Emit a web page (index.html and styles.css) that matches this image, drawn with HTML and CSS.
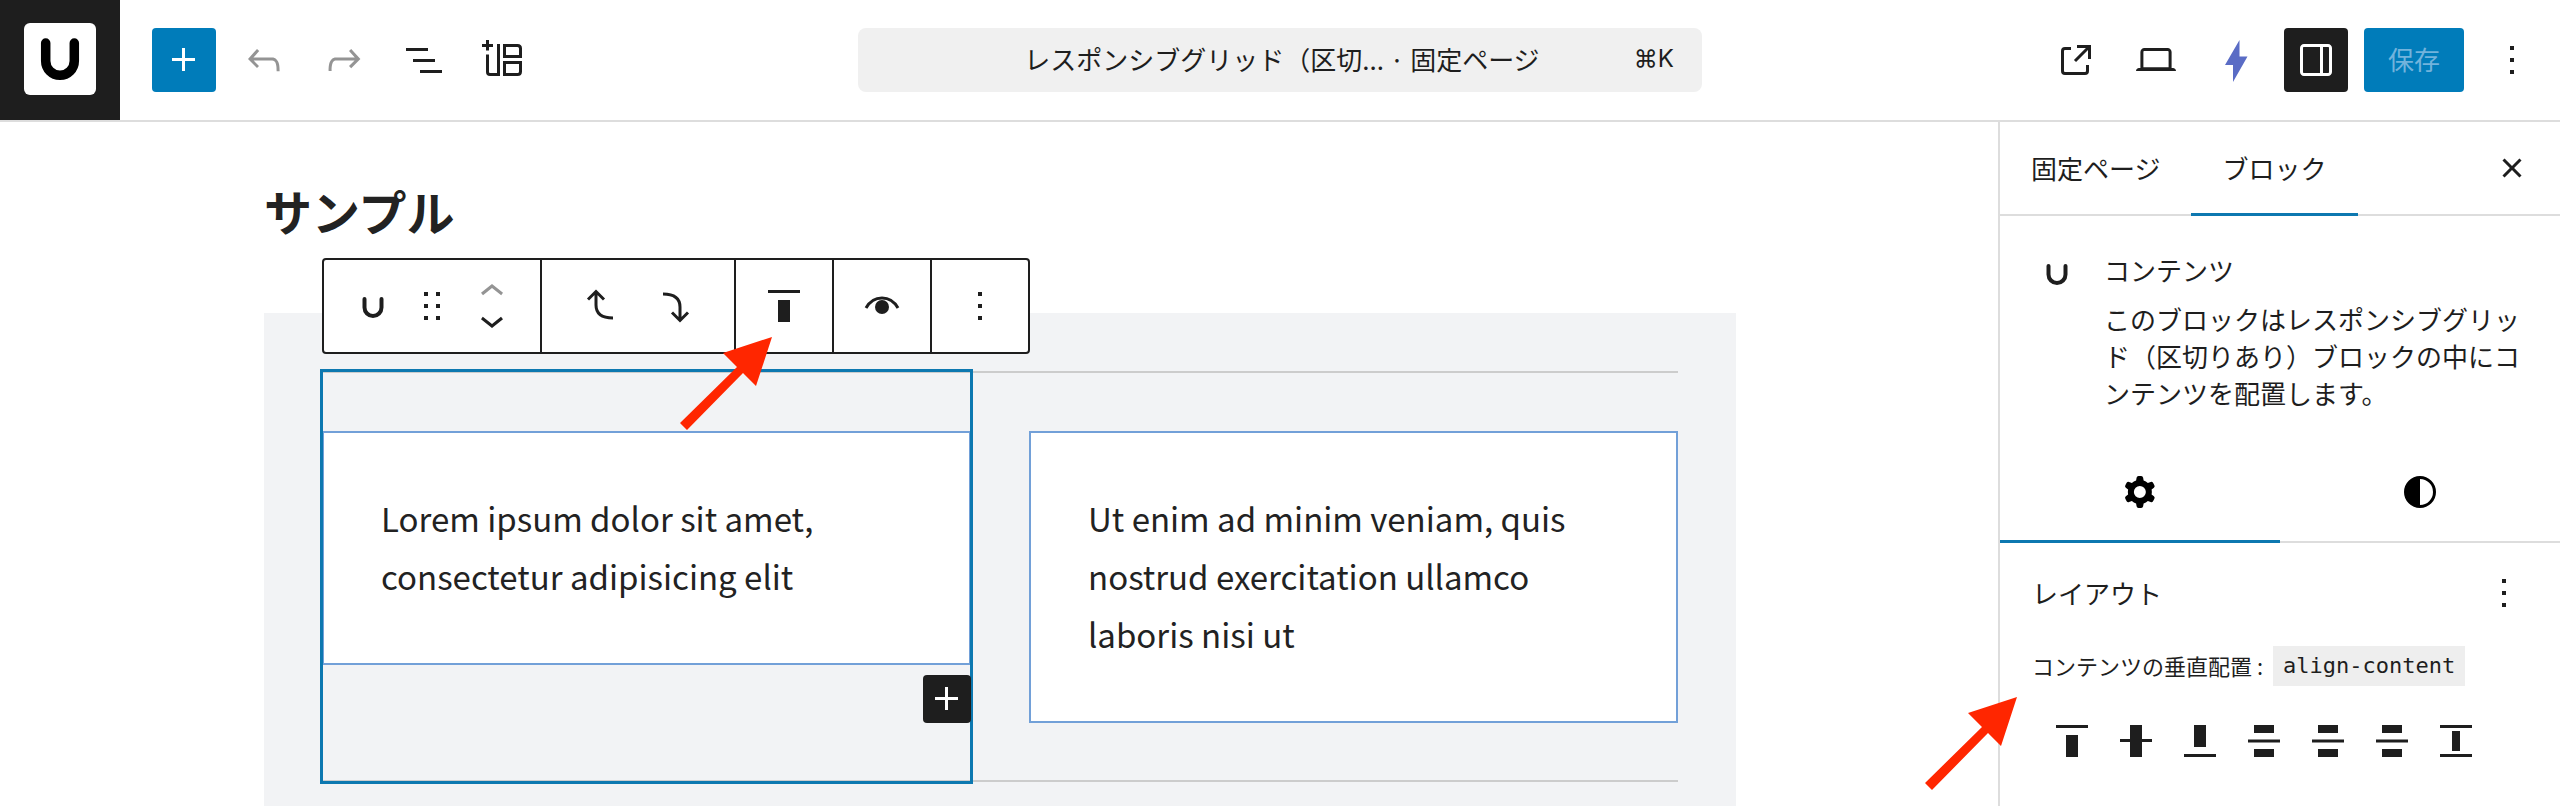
FILE: index.html
```
<!DOCTYPE html>
<html lang="ja">
<head>
    <meta charset="UTF-8">
    <meta name="viewport" content="width=device-width, initial-scale=1.0">
    <title>レスポンシブグリッド</title>
    <link rel="stylesheet" href="styles.css">
</head>
<body>
    <header class="header">
        <a href="#" class="site-logo" aria-label="Site">
            <svg viewBox="0 0 120 120">
                <rect x="24" y="23" width="72" height="72" rx="6" fill="#fff"/>
                <path d="M45.7 43V61a14.3 14.3 0 0 0 28.6 0V43" fill="none" stroke="#000" stroke-width="9.5" stroke-linecap="round"/>
            </svg>
        </a>

        <div class="header-left">
            <button class="icon-button primary" aria-label="追加">
                <svg viewBox="0 0 24 24"><path d="M11 12.5V17.5H12.5V12.5H17.5V11H12.5V6H11V11H6V12.5H11Z"/></svg>
            </button>
            <button class="icon-button" aria-label="元に戻す" disabled>
                <svg viewBox="0 0 24 24"><path d="M18.3 11.7c-.6-.6-1.4-.9-2.3-.9H6.7l2.9-3.3-1.1-1-4.5 5L8.5 16l1-1-2.7-2.7H16c.5 0 .9.2 1.3.5 1 1 1 3.4 1 4.5v.3h1.5v-.2c0-1.5 0-4.3-1.5-5.7z"/></svg>
            </button>
            <button class="icon-button" aria-label="やり直す" disabled>
                <svg viewBox="0 0 24 24"><path d="M15.6 6.5l-1.1 1 2.9 3.3H8c-.9 0-1.7.3-2.3.9-1.4 1.5-1.4 4.2-1.4 5.6v.2h1.5v-.3c0-1.1 0-3.5 1-4.5.3-.3.7-.5 1.3-.5h9.2L14.5 15l1.1 1.1 4.6-4.6-4.6-5z"/></svg>
            </button>
            <button class="icon-button" aria-label="リスト表示">
                <svg viewBox="0 0 24 24"><path d="M3 6h11v1.5H3V6Zm3.5 5.5h11V13h-11v-1.5ZM21 17H10v1.5h11V17Z"/></svg>
            </button>
            <button class="icon-button" aria-label="パターン">
                <svg viewBox="0 0 48 48" class="line-icon"><path d="M7.5 4v10.5M2 9.500h11M7.500 18.500v17.500q0 2.500 2.500 2.500h8.500V8M24.500 9.500h13q3 0 3 3v8h-16zM24.500 26.500h16v9q0 3-3 3h-13z"/></svg>
            </button>
        </div>

        <button class="document-bar">
            <span class="document-title">レスポンシブグリッド（区切... · 固定ページ</span>
            <span class="shortcut">⌘K</span>
        </button>

        <div class="header-right">
            <button class="icon-button" aria-label="表示">
                <svg viewBox="0 0 24 24"><path d="M19.5 4.5h-7V6h4.44l-5.97 5.97 1.06 1.06L18 7.06v4.44h1.5v-7Zm-13 1a2 2 0 0 0-2 2v10a2 2 0 0 0 2 2h10a2 2 0 0 0 2-2v-3H17v3a.5.5 0 0 1-.5.5h-10a.5.5 0 0 1-.5-.5v-10a.5.5 0 0 1 .5-.5h3V5.5h-3Z"/></svg>
            </button>
            <button class="icon-button" aria-label="プレビュー">
                <svg viewBox="0 0 24 24"><path d="M20.5 16h-.7V8c0-1.1-.9-2-2-2H6.2c-1.1 0-2 .9-2 2v8h-.7c-.8 0-1.5.7-1.5 1.5h20c0-.8-.7-1.5-1.5-1.5zM5.7 8c0-.3.2-.5.5-.5h11.6c.3 0 .5.2.5.5v7.6H5.7V8z"/></svg>
            </button>
            <button class="icon-button bolt" aria-label="設定">
                <svg viewBox="0 0 48 48"><path d="M27.500 7v16.500h8L21 49V32H13z" transform="translate(0 -3)"/></svg>
            </button>
            <button class="icon-button active" aria-label="サイドバー">
                <svg viewBox="0 0 24 24"><path d="M18 4H6c-1.1 0-2 .9-2 2v12c0 1.1.9 2 2 2h12c1.1 0 2-.9 2-2V6c0-1.1-.9-2-2-2zm-4 14.5H6c-.3 0-.5-.2-.5-.5V6c0-.3.2-.5.5-.5h8v13zm4.5-.5c0 .3-.2.5-.5.5h-2.5v-13H18c.3 0 .5.2.5.5v12z"/></svg>
            </button>
            <button class="save-button">保存</button>
            <button class="icon-button" aria-label="オプション">
                <svg viewBox="0 0 24 24"><path d="M13 19h-2v-2h2v2zm0-6h-2v-2h2v2zm0-6h-2V5h2v2z"/></svg>
            </button>
        </div>
    </header>

    <div class="workspace">
        <main class="editor">
            <div class="canvas">
                <h1>サンプル</h1>
                <div class="section-block">
                    <div class="grid">
                        <div class="cell selected">
                            <div class="card">
                                <p>Lorem ipsum dolor sit amet, consectetur adipisicing elit</p>
                            </div>

                            <div class="toolbar">
                                <div class="toolbar-group block-group">
                                    <button class="tool" aria-label="コンテンツ">
                                        <svg viewBox="0 0 48 48" class="u-icon"><path d="M16.500 17v8.500a8.500 8.500 0 0 0 17 0V17"/></svg>
                                    </button>
                                    <button class="tool" aria-label="ドラッグ">
                                        <svg viewBox="0 0 24 24"><path d="M8 7h2V5H8v2zm0 6h2v-2H8v2zm0 6h2v-2H8v2zm6-14v2h2V5h-2zm0 8h2v-2h-2v2zm0 6h2v-2h-2v2z"/></svg>
                                    </button>
                                    <div class="movers">
                                        <button class="tool" aria-label="上に移動" disabled>
                                            <svg viewBox="0 0 24 24"><path d="M6.5 12.4L12 8l5.5 4.4-.9 1.2L12 10l-4.5 3.6-1-1.2z"/></svg>
                                        </button>
                                        <button class="tool" aria-label="下に移動">
                                            <svg viewBox="0 0 24 24"><path d="M17.5 11.6L12 16l-5.5-4.4.9-1.2L12 14l4.5-3.6 1 1.2z"/></svg>
                                        </button>
                                    </div>
                                </div>
                                <div class="toolbar-group arrow-group">
                                    <button class="tool" aria-label="前に移動">
                                        <svg viewBox="0 0 48 48" class="line-icon"><path d="M12 17.500l8-8 8 8M20 10v13q0 13 17 13"/></svg>
                                    </button>
                                    <button class="tool" aria-label="後に移動">
                                        <svg viewBox="0 0 48 48" class="line-icon"><path d="M11 12q17 0 17 13v13M20 30.500l8 8 8-8"/></svg>
                                    </button>
                                </div>
                                <div class="toolbar-group">
                                    <button class="tool" aria-label="垂直配置">
                                        <svg viewBox="0 0 48 48"><path d="M8 8h32v3H8zM18 18h12v22H18z"/></svg>
                                    </button>
                                </div>
                                <div class="toolbar-group">
                                    <button class="tool" aria-label="表示設定">
                                        <svg viewBox="0 0 48 48"><path d="M8 26C12 19 17 16 24 16s12 3 16 10" fill="none" stroke="currentColor" stroke-width="3"/><circle cx="24" cy="25" r="7"/></svg>
                                    </button>
                                </div>
                                <div class="toolbar-group">
                                    <button class="tool" aria-label="オプション">
                                        <svg viewBox="0 0 24 24"><path d="M13 19h-2v-2h2v2zm0-6h-2v-2h2v2zm0-6h-2V5h2v2z"/></svg>
                                    </button>
                                </div>
                            </div>

                            <button class="inserter" aria-label="ブロックを追加">
                                <svg viewBox="0 0 24 24"><path d="M11 12.5V17.5H12.5V12.5H17.5V11H12.5V6H11V11H6V12.5H11Z"/></svg>
                            </button>
                            <svg class="pointer pointer-toolbar" viewBox="0 0 94 94"><path d="M93 1L44 17l14 14L1 87l7 7 56-57 13 13z"/></svg>
                        </div>
                        <div class="cell">
                            <div class="card">
                                <p>Ut enim ad minim veniam, quis nostrud exercitation ullamco laboris nisi ut</p>
                            </div>
                        </div>
                    </div>
                </div>
            </div>
        </main>

        <aside class="sidebar">
            <div class="tabs">
                <button class="tab">固定ページ</button>
                <button class="tab current">ブロック</button>
                <button class="icon-button close" aria-label="閉じる">
                    <svg viewBox="0 0 24 24"><path d="M12 13.06l3.712 3.713 1.061-1.06L13.061 12l3.712-3.712-1.06-1.06L12 10.938 8.288 7.227l-1.061 1.06L10.939 12l-3.712 3.712 1.06 1.061L12 13.061z"/></svg>
                </button>
            </div>

            <div class="block-card">
                <svg viewBox="0 0 48 48" class="u-icon"><path d="M16.500 17v8.500a8.500 8.500 0 0 0 17 0V17"/></svg>
                <div>
                    <h2>コンテンツ</h2>
                    <p>このブロックはレスポンシブグリッド（区切りあり）ブロックの中にコンテンツを配置します。</p>
                </div>
            </div>

            <div class="icon-tabs">
                <button class="icon-tab current" aria-label="設定">
                    <svg viewBox="0 0 24 24"><path fill-rule="evenodd" d="M10.289 4.836A1 1 0 0111.275 4h1.306a1 1 0 01.987.836l.244 1.466c.787.26 1.503.679 2.108 1.218l1.393-.522a1 1 0 011.216.437l.653 1.13a1 1 0 01-.23 1.273l-1.148.944a6.025 6.025 0 010 2.435l1.149.946a1 1 0 01.23 1.272l-.653 1.13a1 1 0 01-1.216.437l-1.394-.522c-.605.54-1.32.958-2.108 1.218l-.244 1.466a1 1 0 01-.987.836h-1.306a1 1 0 01-.986-.836l-.244-1.466a5.995 5.995 0 01-2.108-1.218l-1.394.522a1 1 0 01-1.217-.436l-.653-1.131a1 1 0 01.23-1.272l1.149-.946a6.026 6.026 0 010-2.435l-1.148-.944a1 1 0 01-.23-1.272l.653-1.131a1 1 0 011.217-.437l1.393.522a5.994 5.994 0 012.108-1.218l.244-1.466zM14.929 12a3 3 0 11-6 0 3 3 0 016 0z"/></svg>
                </button>
                <button class="icon-tab" aria-label="スタイル">
                    <svg viewBox="0 0 48 48"><circle cx="24" cy="24" r="14.5" fill="none" stroke="currentColor" stroke-width="3"/><path d="M24 9a15 15 0 0 0 0 30z"/></svg>
                </button>
            </div>

            <section class="panel">
                <div class="panel-header">
                    <h2>レイアウト</h2>
                    <button class="icon-button" aria-label="レイアウトオプション">
                        <svg viewBox="0 0 24 24"><path d="M13 19h-2v-2h2v2zm0-6h-2v-2h2v2zm0-6h-2V5h2v2z"/></svg>
                    </button>
                </div>
                <div class="control-label">
                    <span>コンテンツの垂直配置 :</span>
                    <code>align-content</code>
                </div>
                <div class="align-options">
                    <button aria-label="start"><svg viewBox="0 0 32 32"><path d="M0 0h32v3H0zM10 10h12v22H10z"/></svg></button>
                    <button aria-label="center"><svg viewBox="0 0 32 32"><path d="M0 14h32v3H0zM10 0h12v32H10z"/></svg></button>
                    <button aria-label="end"><svg viewBox="0 0 32 32"><path d="M0 29h32v3H0zM10 0h12v22H10z"/></svg></button>
                    <button aria-label="space-between"><svg viewBox="0 0 32 32"><path d="M6 0h20v8H6zM0 14.5h32v3H0zM6 24h20v8H6z"/></svg></button>
                    <button aria-label="space-around"><svg viewBox="0 0 32 32"><path d="M6 0h20v8H6zM0 14.5h32v3H0zM6 24h20v8H6z"/></svg></button>
                    <button aria-label="space-evenly"><svg viewBox="0 0 32 32"><path d="M6 0h20v8H6zM0 14.5h32v3H0zM6 24h20v8H6z"/></svg></button>
                    <button aria-label="stretch"><svg viewBox="0 0 32 32"><path d="M0 0h32v3H0zM12 6h8v20h-8zM0 29h32v3H0z"/></svg></button>
                </div>
            </section>
            <svg class="pointer pointer-sidebar" viewBox="0 0 94 94"><path d="M93 1L44 17l14 14L1 87l7 7 56-57 13 13z"/></svg>
        </aside>
    </div>
</body>
</html>
```

FILE: styles.css
```
* {
    margin: 0;
    padding: 0;
    box-sizing: border-box;
}

body {
    min-height: 100vh;
    display: flex;
    flex-direction: column;
    background-color: #fff;
    color: #1e1e1e;
    font-family: "Noto Sans CJK JP", sans-serif;
    font-size: 26px;
    overflow: hidden;
}

button {
    border: none;
    background: none;
    color: inherit;
    font: inherit;
    cursor: pointer;
}

svg {
    display: block;
    flex-shrink: 0;
    width: 48px;
    height: 48px;
    fill: currentColor;
}

h1 {
    margin-bottom: 67px;
    color: #222;
    font-size: 48px;
    line-height: 72px;
}

h2 {
    font-size: 26px;
    font-weight: 400;
    line-height: 36px;
}

/* Header */
.header {
    display: grid;
    grid-template-columns: 120px minmax(0, 1fr) 844px minmax(0, 1fr) 120px;
    align-items: center;
    height: 122px;
    border-bottom: 2px solid #ddd;
}

.site-logo {
    background-color: #1e1e1e;
}

.site-logo svg {
    width: 120px;
    height: 120px;
}

.header-left,
.header-right {
    display: flex;
    align-items: center;
    gap: 16px;
}

.header-left {
    padding-left: 32px;
}

.header-right {
    grid-column: 4 / 6;
    justify-content: flex-end;
    padding-right: 16px;
}

.icon-button {
    display: flex;
    align-items: center;
    justify-content: center;
    width: 64px;
    height: 64px;
    border-radius: 4px;
}

.icon-button:disabled,
.tool:disabled {
    color: #949494;
}

.primary {
    background-color: #007cba;
    color: #fff;
}

.active {
    background-color: #1e1e1e;
    color: #fff;
}

.bolt {
    color: #5a6cc5;
}

.line-icon {
    fill: none;
    stroke: currentColor;
    stroke-width: 3;
}

.u-icon {
    fill: none;
    stroke: currentColor;
    stroke-width: 4;
    stroke-linecap: round;
}

.document-bar {
    display: flex;
    align-items: center;
    height: 64px;
    padding: 0 28px 3px;
    border-radius: 8px;
    background-color: #f0f0f0;
}

.document-title {
    flex: 1;
    padding-left: 44px;
}

.shortcut {
    font-family: Inter, sans-serif;
    font-size: 24px;
}

.save-button {
    width: 100px;
    height: 64px;
    padding-bottom: 3px;
    border-radius: 4px;
    background-color: #007cba;
    color: #72b3dc;
}

/* Editor */
.workspace {
    flex: 1;
    display: flex;
}

.editor {
    flex: 1;
    display: flex;
    justify-content: center;
}

.canvas {
    flex: 1;
    display: flex;
    flex-direction: column;
    max-width: 1472px;
    padding-top: 52px;
}

.section-block {
    flex: 1;
    padding: 58px 58px 24px;
    background-color: #f2f3f5;
}

.grid {
    display: grid;
    grid-template-columns: 1fr 1fr;
    gap: 58px;
    box-shadow: inset 0 2px #ccc, inset 0 -2px #ccc;
}

.cell {
    padding: 60px 0 59px;
}

.selected {
    position: relative;
    outline: 3px solid #0d78b0;
    outline-offset: -1px;
}

.card {
    padding: 56px 57px 58px;
    border: 2px solid #72a0d8;
    background-color: #fff;
    color: #222;
    font-size: 33px;
    line-height: 58px;
}

/* Block toolbar */
.toolbar {
    position: absolute;
    top: -113px;
    left: 0;
    display: flex;
    height: 96px;
    border: 2px solid #1e1e1e;
    border-radius: 4px;
    background-color: #fff;
}

.toolbar-group {
    display: flex;
    align-items: center;
    justify-content: center;
    width: 98px;
}

.toolbar-group + .toolbar-group {
    border-left: 2px solid #1e1e1e;
}

.toolbar .block-group {
    width: 216px;
    gap: 12px;
}

.toolbar .arrow-group {
    width: 194px;
    gap: 28px;
}

.movers {
    display: flex;
    flex-direction: column;
}

.movers .tool {
    height: 28px;
    display: flex;
    align-items: center;
}

.inserter {
    position: absolute;
    right: 0;
    bottom: 59px;
    border-radius: 4px;
    background-color: #1e1e1e;
    color: #fff;
}

/* Red pointers */
.pointer {
    position: absolute;
    width: 94px;
    height: 94px;
    fill: #ff2600;
}

.pointer-toolbar {
    top: -35px;
    left: 357px;
}

.pointer-sidebar {
    bottom: 16px;
    left: -76px;
}

/* Sidebar */
.sidebar {
    position: relative;
    width: 560px;
    box-shadow: -2px 0 #ddd;
}

.tabs,
.icon-tabs {
    display: flex;
    height: 94px;
    box-shadow: inset 0 -2px #ddd;
}

.tab {
    padding: 0 31px 4px;
}

.tab.current,
.icon-tab.current {
    box-shadow: inset 0 -3px #0d78b0;
}

.close {
    align-self: center;
    margin: 0 16px 2px auto;
}

.block-card {
    display: flex;
    gap: 24px;
    padding: 33px 32px 34px;
}

.block-card h2 {
    margin: 3px 0 12px;
}

.block-card p {
    line-height: 37px;
}

.icon-tabs {
    height: 98px;
}

.icon-tab {
    flex: 1;
    display: flex;
    align-items: center;
    justify-content: center;
    padding-bottom: 4px;
    color: #000;
}

.panel {
    padding: 18px 24px 0 32px;
}

.panel-header {
    display: flex;
    align-items: center;
    justify-content: space-between;
}

.control-label {
    display: flex;
    align-items: center;
    gap: 10px;
    margin-top: 20px;
    font-size: 22px;
    line-height: 40px;
}

.control-label span {
    padding-bottom: 2px;
}

.control-label code {
    padding: 0 10px;
    background-color: #eee;
    font-family: "DejaVu Sans Mono", monospace;
    font-size: 22px;
}

.align-options {
    display: flex;
    padding: 22px 8px;
}

.align-options button {
    padding: 16px;
}

.align-options svg {
    width: 32px;
    height: 32px;
}
```
